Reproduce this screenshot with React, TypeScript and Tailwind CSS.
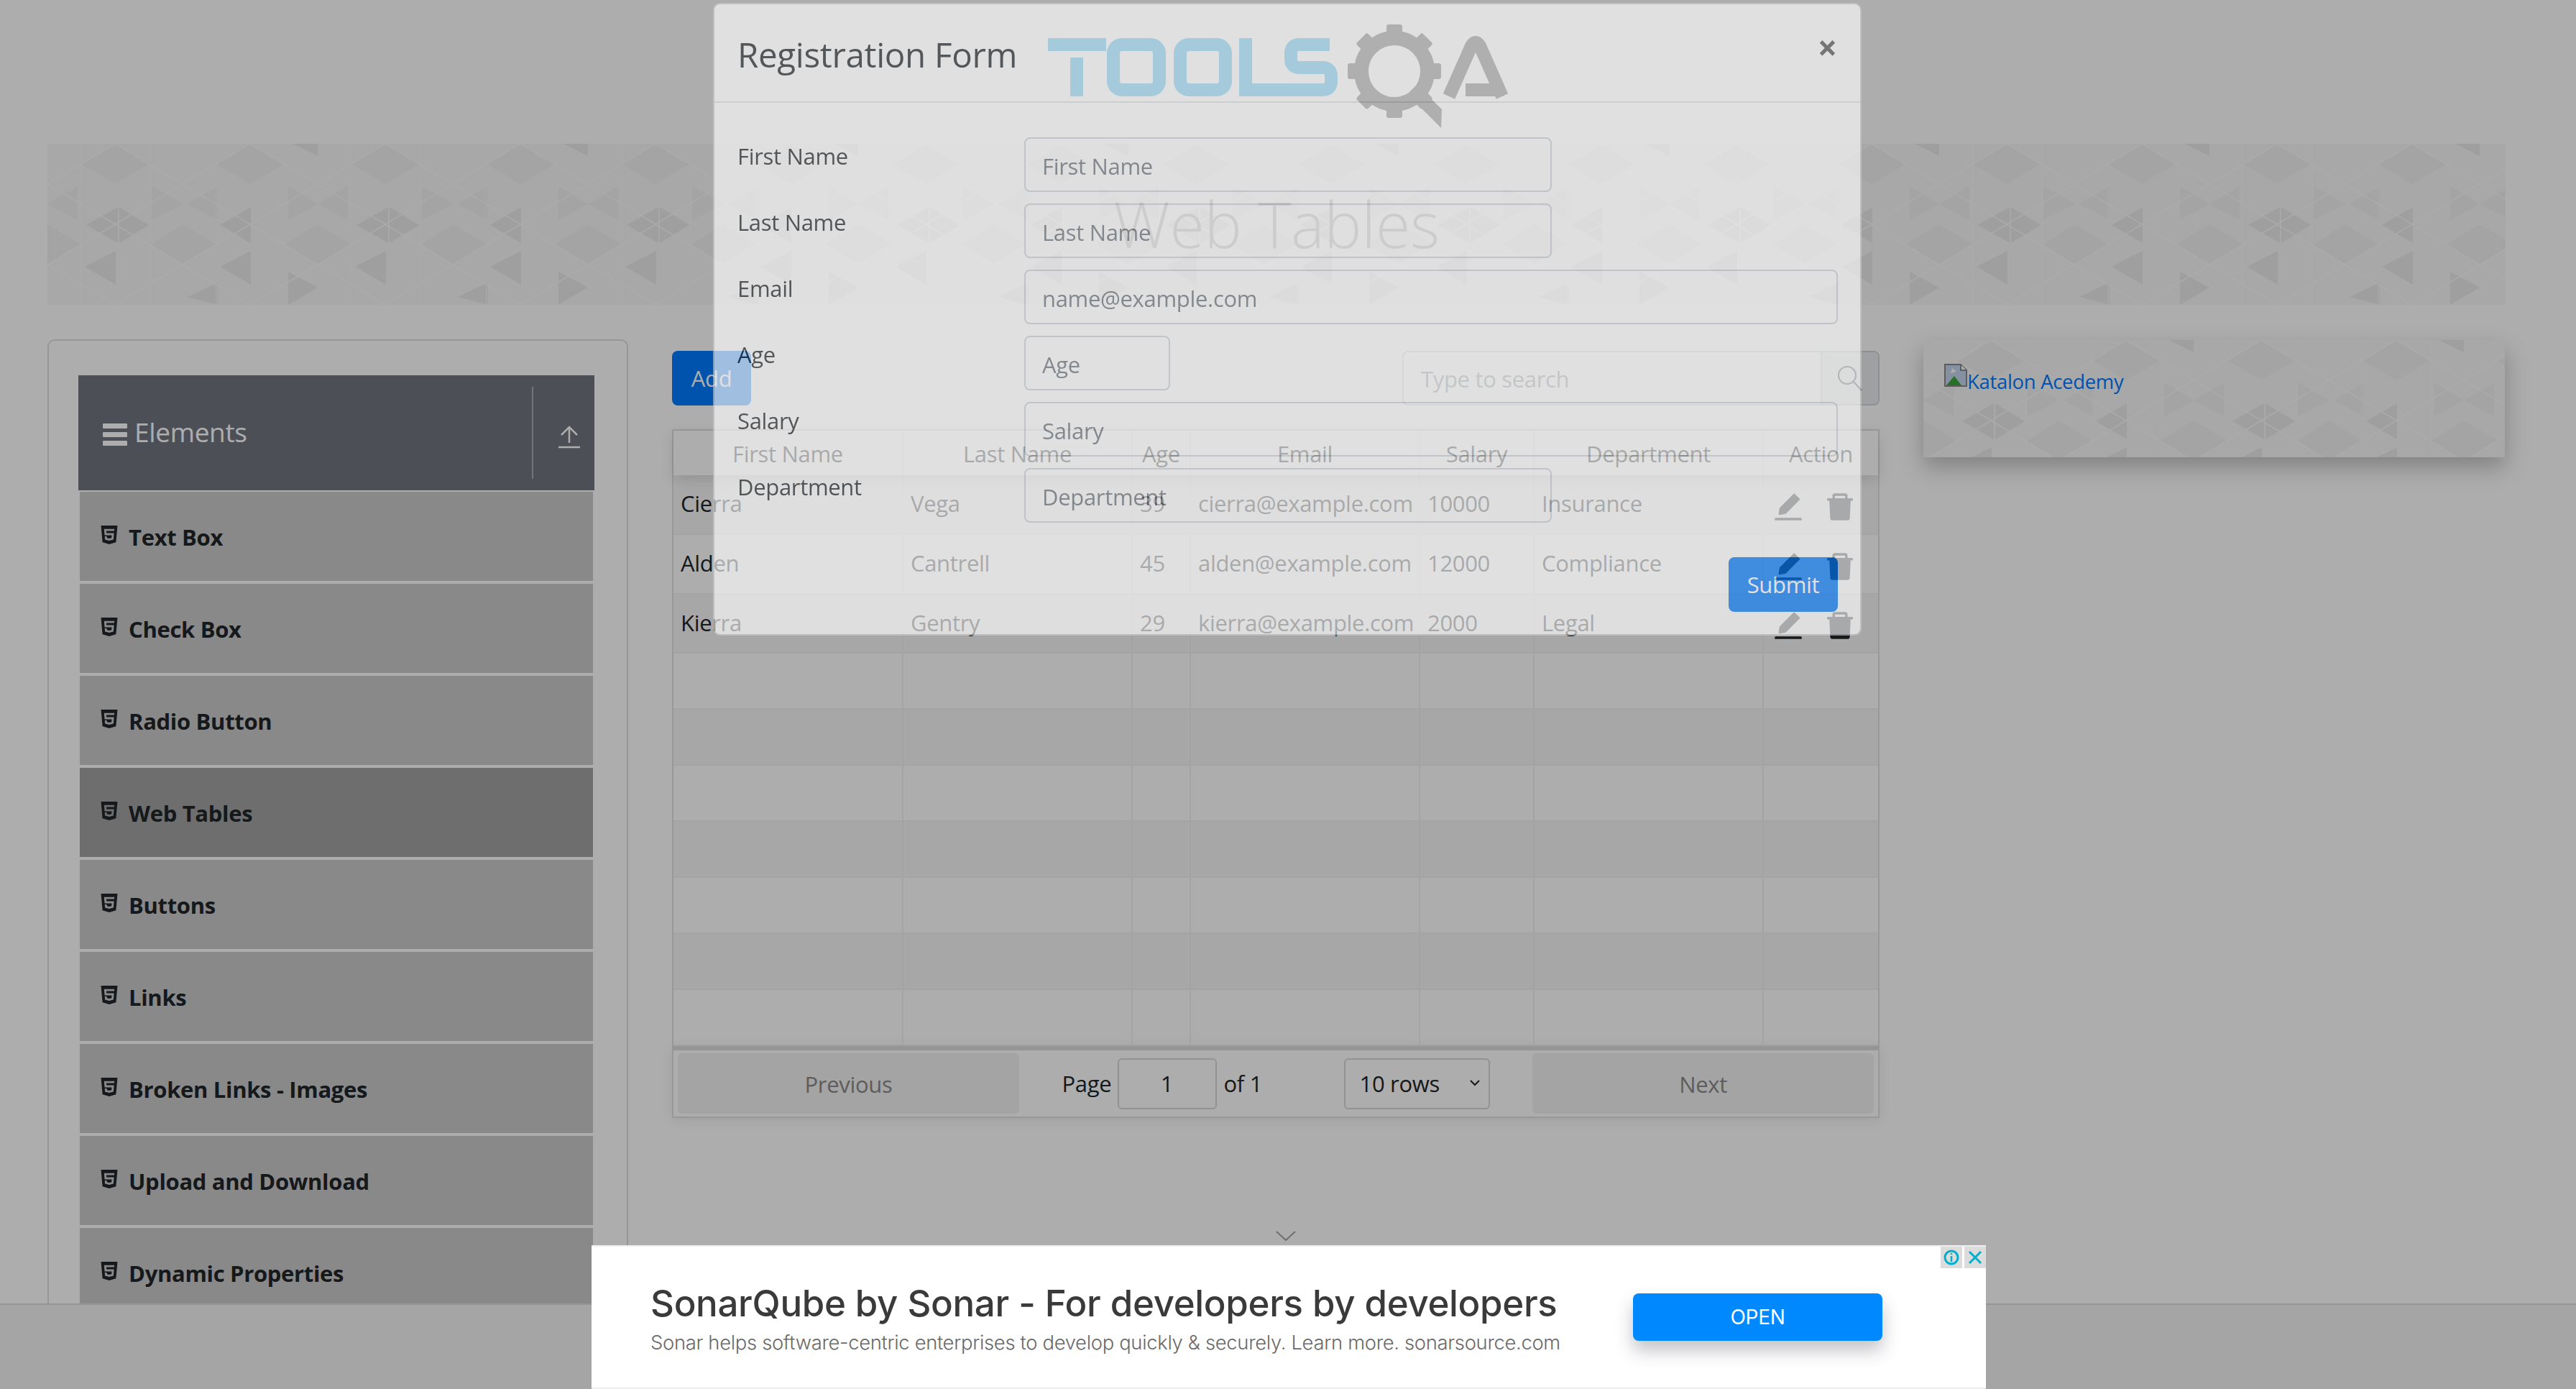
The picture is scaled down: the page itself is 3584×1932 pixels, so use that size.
import { AiFillDelete, AiFillEdit, AiFillHtml5 } from "react-icons/ai";

const people = [
  { first: "Cierra", last: "Vega", age: "39", email: "cierra@example.com", salary: "10000", dept: "Insurance" },
  { first: "Alden", last: "Cantrell", age: "45", email: "alden@example.com", salary: "12000", dept: "Compliance" },
  { first: "Kierra", last: "Gentry", age: "29", email: "kierra@example.com", salary: "2000", dept: "Legal" },
];

const menu = ["Text Box", "Check Box", "Radio Button", "Web Tables", "Buttons", "Links", "Broken Links - Images", "Upload and Download", "Dynamic Properties"];
const columns = ["First Name", "Last Name", "Age", "Email", "Salary", "Department", "Action"];
const rowCols = "grid grid-cols-[320px_319px_81px_319px_159px_319px_1fr]";

const fields = [
  { label: "First Name", placeholder: "First Name", width: "w-[734px]" },
  { label: "Last Name", placeholder: "Last Name", width: "w-[734px]" },
  { label: "Email", placeholder: "name@example.com", width: "w-full" },
  { label: "Age", placeholder: "Age", width: "w-[203px]" },
  { label: "Salary", placeholder: "Salary", width: "w-full" },
  { label: "Department", placeholder: "Department", width: "w-[734px]" },
];

// triangle wallpaper used behind the banners
function Wallpaper({ id }: { id: string }) {
  return (
    <svg className="absolute inset-0 w-full h-full" xmlns="http://www.w3.org/2000/svg">
      <defs>
        <pattern id={id} width="376" height="224" patternUnits="userSpaceOnUse">
          <rect width="376" height="224" fill="#f8f8f8" />
          <g fill="#ebebeb">
            <polygon points="54,113 98,88 98,138" />
            <polygon points="100,88 141,113 100,138" />
            <polygon points="240,113 283,88 283,138" />
            <polygon points="52,171 95,149 95,196" />
            <polygon points="240,171 283,149 283,196" />
            <polygon points="195,213 237,193 237,224" />
            <polygon points="335,178 376,200 335,224" />
            <polygon points="342,0 376,0 376,17" />
          </g>
          <g fill="#f2f2f2">
            <polygon points="145,59 189,84 145,106" />
            <polygon points="195,84 237,59 237,106" />
            <polygon points="335,59 376,84 335,106" />
            <polygon points="0,84 42,59 42,106" />
            <polygon points="94,0 47,28 94,56" />
            <polygon points="94,0 141,28 94,56" />
            <polygon points="282,0 235,28 282,56" />
            <polygon points="282,0 330,28 282,56" />
            <polygon points="188,112 145,140 188,168" />
            <polygon points="188,112 235,140 188,168" />
            <polygon points="0,112 47,140 0,168" />
            <polygon points="376,112 330,140 376,168" />
          </g>
          <g stroke="#fdfdfd" strokeWidth="1.5" fill="none">
            <path d="M0 56 L94 0 L188 56 L282 0 L376 56 M0 168 L94 112 L188 168 L282 112 L376 168 M0 56 L94 112 L188 56 L282 112 L376 56 M0 168 L94 224 L188 168 L282 224 L376 168" />
            <path d="M47 0 V224 M143 0 V224 M235 0 V224 M330 0 V224" strokeWidth="1" />
          </g>
        </pattern>
      </defs>
      <rect width="100%" height="100%" fill={`url(#${id})`} />
    </svg>
  );
}

function ToolsQaLogo() {
  const teeth = [0, 45, 90, 135, 180, 225, 270, 315];
  return (
    <svg width="704" height="200" viewBox="1440 0 704 200" xmlns="http://www.w3.org/2000/svg">
      <g fill="#11a8ee">
        <rect x="1458" y="53" width="81" height="18" />
        <rect x="1489" y="80" width="18" height="54" />
      </g>
      <g fill="none" stroke="#11a8ee" strokeWidth="18">
        <rect x="1549" y="62" width="64" height="63" rx="12" />
        <rect x="1642" y="62" width="63" height="63" rx="12" />
        <path d="M1733 53 V125 H1840 Q1852 125 1852 113 V106 Q1852 94 1840 94 H1808 Q1796 94 1796 82 V74 Q1796 62 1808 62 H1850" />
      </g>
      <g fill="#3c3c3c">
        <circle cx="1940" cy="99" r="46" fill="none" stroke="#3c3c3c" strokeWidth="20" />
        {teeth.map((deg) => (
          <rect key={deg} x="1929" y="34" width="22" height="18" rx="3" transform={`rotate(${deg} 1940 99)`} />
        ))}
        <polygon points="1958,131 1971,118 2006,152 2005,178" />
      </g>
      <path d="M2016 134 L2047 64 Q2053 54 2059 64 L2090 134 M2039 125 H2092" fill="none" stroke="#3c3c3c" strokeWidth="18" />
    </svg>
  );
}

function BrokenImage() {
  return (
    <svg width="32" height="32" viewBox="0 0 32 32" xmlns="http://www.w3.org/2000/svg" className="shrink-0">
      <path d="M1 1 H23 L31 9 V31 H1 Z" fill="#c5d5ee" stroke="#8a8a8a" strokeWidth="2" />
      <path d="M23 1 V9 H31" fill="#ffffff" stroke="#8a8a8a" strokeWidth="2" />
      <polygon points="3,30 14,17 24,30" fill="#3aa53a" />
      <polygon points="11,6 17,11 9,13" fill="#ffffff" />
    </svg>
  );
}

function Sidebar() {
  return (
    <div className="w-[808px] h-[1400px] mt-[12px] shrink-0 border-2 border-[#dedede] rounded-[10px] pl-[41px] pr-[45px] pt-[48px]">
      <div className="h-[160px] bg-[#70757f] flex items-center justify-between pl-[34px]">
        <div className="flex items-center gap-[10px] text-white text-[37px] -mt-[2px]">
          <div className="flex flex-col gap-[5px] w-[34px] mt-[6px]">
            <span className="h-[7px] rounded-[1px] bg-white" />
            <span className="h-[7px] rounded-[1px] bg-white" />
            <span className="h-[7px] rounded-[1px] bg-white" />
          </div>
          Elements
        </div>
        <div className="h-[128px] w-[87px] border-l-2 border-[#a9adb4] flex items-center justify-center pl-[14px] pt-[12px]">
          <svg width="32" height="32" viewBox="0 0 32 32" fill="none" stroke="#fff" strokeWidth="2.5" xmlns="http://www.w3.org/2000/svg">
            <path d="M16 24 V3 M5 13 L16 2 L27 13 M1 30 H31" />
          </svg>
        </div>
      </div>
      <div className="flex flex-col gap-[4px] mt-[2px] mx-[2px]">
        {menu.map((item) => (
          <div
            key={item}
            className={`h-[124px] shrink-0 flex items-center gap-[11px] pl-[25px] pt-[2px] text-[31px] font-bold text-[#212529] ${item === "Web Tables" ? "bg-[#a2a2a2]" : "bg-[#cbcbcb]"}`}
          >
            <AiFillHtml5 size={32} className="-mt-[7px]" />
            {item}
          </div>
        ))}
      </div>
    </div>
  );
}

function WebTable() {
  return (
    <div className="w-[1680px] shrink-0 mt-[28px] text-[31px] text-[#212529]">
      <div className="h-[76px] flex justify-between">
        <button className="w-[110px] h-[76px] bg-[#007bff] rounded-[8px] text-white text-[31px]">Add</button>
        <div className="w-[664px] flex border-2 border-[#ced4da] rounded-[8px] overflow-hidden">
          <input placeholder="Type to search" className="flex-1 min-w-0 px-[24px] pt-[3px] bg-white text-[31px] placeholder:text-[#8d959c] outline-none" />
          <div className="w-[80px] bg-[#e9ecef] border-l-2 border-[#ced4da] flex items-center justify-center">
            <svg width="38" height="38" viewBox="0 0 38 38" fill="none" stroke="#495057" strokeWidth="2" xmlns="http://www.w3.org/2000/svg">
              <circle cx="15" cy="15" r="12" />
              <path d="M24 24 L35 36" />
            </svg>
          </div>
        </div>
      </div>
      <div className="mt-[33px] border-2 border-[#e2e2e2] border-b-0">
        <div className={`${rowCols} h-[62px] items-center text-center relative shadow-[0_6px_20px_rgba(0,0,0,0.12)]`}>
          {columns.map((col) => (
            <div key={col} className="h-full flex items-center justify-center pt-[3px] border-r-2 border-[#f0f0f0] last:border-r-0">{col}</div>
          ))}
        </div>
        {Array.from({ length: 10 }).map((_, i) => {
          const person = people[i];
          const cells = person ? [person.first, person.last, person.age, person.email, person.salary, person.dept] : ["", "", "", "", "", ""];
          return (
            <div key={i} className={`${rowCols} ${i < 2 ? "h-[83px]" : i === 2 ? "h-[82px]" : "h-[78px]"} ${i % 2 === 0 ? "bg-[#f7f7f7]" : "bg-white"} border-b-2 border-[#f2f2f2]`}>
              {cells.map((cell, c) => (
                <div key={c} className="flex items-center pl-[10px] pb-[2px] border-r-2 border-[#f0f0f0]">{cell}</div>
              ))}
              <div className="flex items-center justify-center gap-[24px] pr-[20px] pt-[6px]">
                {person && <AiFillEdit size={48} />}
                {person && <AiFillDelete size={48} />}
              </div>
            </div>
          );
        })}
      </div>
      <div className="h-[100px] border-2 border-t-[6px] border-[#e0e0e0] border-t-[#dcdcdc] flex items-center justify-between px-[6px] shadow-[0_4px_16px_rgba(0,0,0,0.08)]">
        <button className="w-[475px] h-[84px] pt-[2px] rounded-[6px] bg-[#f2f2f2] text-[#8a8a8a]">Previous</button>
        <div className="flex items-center">
          <span className="w-[67px] whitespace-nowrap">Page</span>
          <input defaultValue="1" className="w-[138px] h-[71px] mx-[10px] border-2 border-[#d8d8d8] rounded-[6px] text-center bg-white outline-none" />
          <span className="w-[52px] whitespace-nowrap">of 1</span>
          <div className="relative ml-[115px]">
            <select className="appearance-none w-[203px] h-[71px] pl-[20px] border-2 border-[#d8d8d8] rounded-[6px] bg-white outline-none">
              <option>10 rows</option>
            </select>
            <svg className="absolute right-[14px] top-[30px] pointer-events-none" width="14" height="9" viewBox="0 0 14 9" fill="none" stroke="#212529" strokeWidth="2" xmlns="http://www.w3.org/2000/svg">
              <path d="M1 1 L7 7 L13 1" />
            </svg>
          </div>
        </div>
        <button className="w-[475px] h-[84px] pt-[2px] rounded-[6px] bg-[#f2f2f2] text-[#8a8a8a]">Next</button>
      </div>
    </div>
  );
}

function RegistrationModal() {
  return (
    <div className="absolute z-20 left-[992px] top-[4px] w-[1598px] h-[880px] opacity-[0.63] bg-white border-2 border-black/20 rounded-[10px] text-[31px] text-[#212529]">
      <div className="h-[137px] border-b-2 border-[#dee2e6] flex items-start justify-between pl-[32px] pr-[32px]">
        <div className="text-[47.5px] font-medium mt-[38px] leading-[64px]">Registration Form</div>
        <div className="text-[48px] font-bold text-[#555] mt-[28px] leading-[64px]">×</div>
      </div>
      <div className="pl-[32px] pr-[31px] pt-[48px]">
        <div className="flex flex-col gap-[16px]">
          {fields.map((f) => (
            <div key={f.label} className="grid grid-cols-[399px_1fr] h-[76px]">
              <label className="pt-[2px] leading-[48px]">{f.label}</label>
              <div>
                <input placeholder={f.placeholder} className={`${f.width} h-[76px] px-[23px] pt-[4px] border-2 border-[#ced4da] rounded-[8px] bg-white text-[31px] placeholder:text-[#6c757d] outline-none`} />
              </div>
            </div>
          ))}
        </div>
        <div className="flex justify-end mt-[48px]">
          <button className="w-[152px] h-[76px] rounded-[8px] bg-[#007bff] text-white text-[31px]">Submit</button>
        </div>
      </div>
    </div>
  );
}

function SonarAd() {
  return (
    <div className="absolute z-30 left-[823px] bottom-0 w-[1940px] h-[200px] bg-white border-y-2 border-[#efefef] flex items-center justify-between pl-[82px] pr-[144px] [font-family:Inter,sans-serif]">
      <svg className="absolute -top-[22px] left-[952px]" width="28" height="14" viewBox="0 0 28 14" fill="none" stroke="#6e6e6e" strokeWidth="2" xmlns="http://www.w3.org/2000/svg">
        <path d="M1 1 L14 13 L27 1" />
      </svg>
      <div className="mt-[2px]">
        <div className="text-[51px] leading-[64px] font-medium text-[#3a3a3a]">SonarQube by Sonar - For developers by developers</div>
        <div className="text-[27.4px] leading-[36px] mt-[4px] font-light text-[#6a6a6a]">Sonar helps software-centric enterprises to develop quickly &amp; securely. Learn more. sonarsource.com</div>
      </div>
      <button className="w-[347px] h-[66px] rounded-[8px] bg-[#0088ff] text-white text-[28px] shadow-[0_14px_24px_rgba(60,60,80,0.3)]">OPEN</button>
      <div className="absolute top-0 right-0 flex gap-[3px]">
        <div className="w-[30px] h-[30px] bg-[#dcdcdc] flex items-center justify-center">
          <svg width="24" height="24" viewBox="0 0 24 24" fill="none" stroke="#00aecd" strokeWidth="3" xmlns="http://www.w3.org/2000/svg">
            <circle cx="12" cy="12" r="9" />
            <path d="M12 6 V8 M12 10 V18" strokeWidth="2.5" />
          </svg>
        </div>
        <div className="w-[30px] h-[30px] bg-[#dcdcdc] flex items-center justify-center">
          <svg width="22" height="22" viewBox="0 0 22 22" fill="none" stroke="#00aecd" strokeWidth="3" xmlns="http://www.w3.org/2000/svg">
            <path d="M3 3 L19 19 M19 3 L3 19" />
          </svg>
        </div>
      </div>
    </div>
  );
}

export default function App() {
  return (
    <div className="relative w-[3584px] h-[1932px] overflow-hidden bg-white tracking-[-0.02em] [font-family:'Open_Sans',sans-serif]">
      <div className="h-[200px] flex justify-center">
        <ToolsQaLogo />
      </div>
      <div className="px-[66px]">
        <div className="relative h-[224px] w-[3420px] flex items-center justify-center">
          <Wallpaper id="banner-pattern" />
          <h1 className="relative text-[88px] font-light text-[#b0b0b0] -mt-[2px]">Web Tables</h1>
        </div>
        <div className="flex items-start gap-[61px] mt-[36px]">
          <Sidebar />
          <WebTable />
          <div className="relative w-[809px] h-[163px] mt-[13px] shrink-0 shadow-[0_14px_30px_rgba(0,0,0,0.25)]">
            <Wallpaper id="katalon-pattern" />
            <div className="relative flex items-start pl-[29px] pt-[33px] text-[27.5px] text-[#007bff]">
              <BrokenImage />
              <span className="mt-[4px]">Katalon Acedemy</span>
            </div>
          </div>
        </div>
      </div>

      <div className="absolute z-[5] left-0 right-0 bottom-0 h-[119px] bg-[#f3f3f3] border-t-2 border-[#dcdcdc]" />

      <div className="absolute inset-0 z-10 bg-black/[0.32]" />
      <RegistrationModal />
      <SonarAd />
    </div>
  );
}
